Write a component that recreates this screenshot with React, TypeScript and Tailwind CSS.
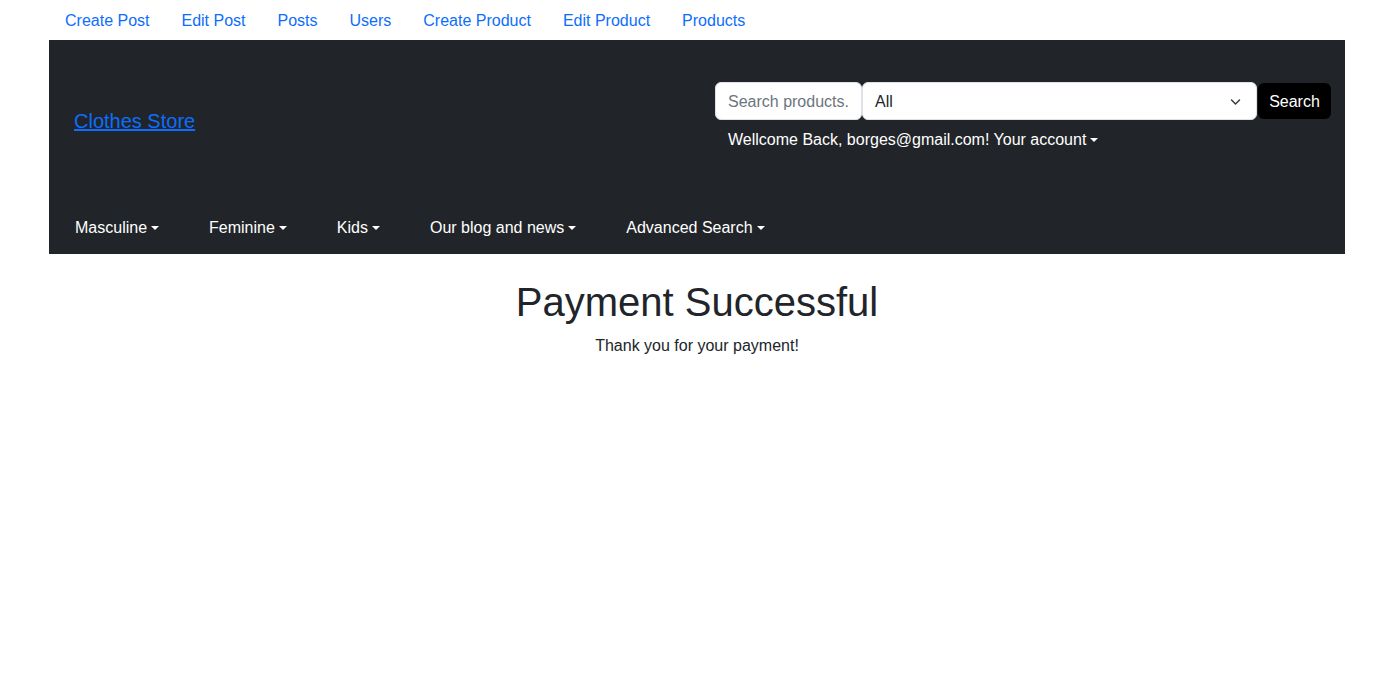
import React from "react";

const font = { fontFamily: '"Liberation Sans", Arial, sans-serif' };

function Caret() {
  return (
    <span className="ml-[4px] inline-block h-0 w-0 border-x-[4.8px] border-t-[4.8px] border-x-transparent border-t-current align-[3px]" />
  );
}

export default function App() {
  const topLinks = ["Create Post", "Edit Post", "Posts", "Users", "Create Product", "Edit Product", "Products"];
  const cats = ["Masculine", "Feminine", "Kids", "Our blog and news", "Advanced Search"];
  return (
    <div className="min-h-[686px] bg-white text-[16px] text-[#212529]" style={font}>
      <nav className="flex pl-[49px]">
        {topLinks.map((l) => (
          <a key={l} href="#" className="px-4 pt-[9px] pb-[7px] leading-6 text-[#0d6efd]">
            {l}
          </a>
        ))}
      </nav>
      <header className="ml-[49px] w-[1296px] bg-[#212529]">
        <div className="flex h-[167px] items-start justify-between">
          <a href="#" className="ml-[25px] mt-[66px] text-[20px] leading-[30px] text-[#0d6efd] underline">
            Clothes Store
          </a>
          <div className="mr-[14px] mt-[42px] flex flex-col">
            <div className="flex items-center">
              <div className="flex h-[38px] w-[147px] items-center rounded-[6px] border border-[#dee2e6] bg-white px-3 pt-px text-[#6c757d]">
                Search products.
              </div>
              <div className="flex h-[38px] w-[395px] items-center justify-between rounded-[6px] border border-[#dee2e6] bg-white pl-3 pr-[15px] pt-px text-[#212529]">
                <span>All</span>
                <svg width="11" height="8" viewBox="0 0 16 12" fill="none" stroke="#343a40" strokeWidth="2.2" strokeLinecap="round" strokeLinejoin="round">
                  <path d="m2 3 6 6 6-6" />
                </svg>
              </div>
              <button className="ml-px flex h-[36px] w-[73px] items-center justify-center rounded-[6px] bg-black pt-px text-white">
                Search
              </button>
            </div>
            <div className="mt-[8px] pl-[13px] leading-6 text-white">
              Wellcome Back, borges@gmail.com! Your account
              <Caret />
            </div>
          </div>
        </div>
        <nav className="flex gap-[50px] pb-[7px] pl-[26px]">
          {cats.map((c) => (
            <a key={c} href="#" className="pt-[9px] pb-[7px] leading-6 text-white">
              {c}
              <Caret />
            </a>
          ))}
        </nav>
      </header>
      <main className="ml-[49px] w-[1296px] text-center">
        <h1 className="mt-[24px] mb-2 text-[40px] font-medium leading-[48px]">Payment Successful</h1>
        <p className="leading-6">Thank you for your payment!</p>
      </main>
    </div>
  );
}
